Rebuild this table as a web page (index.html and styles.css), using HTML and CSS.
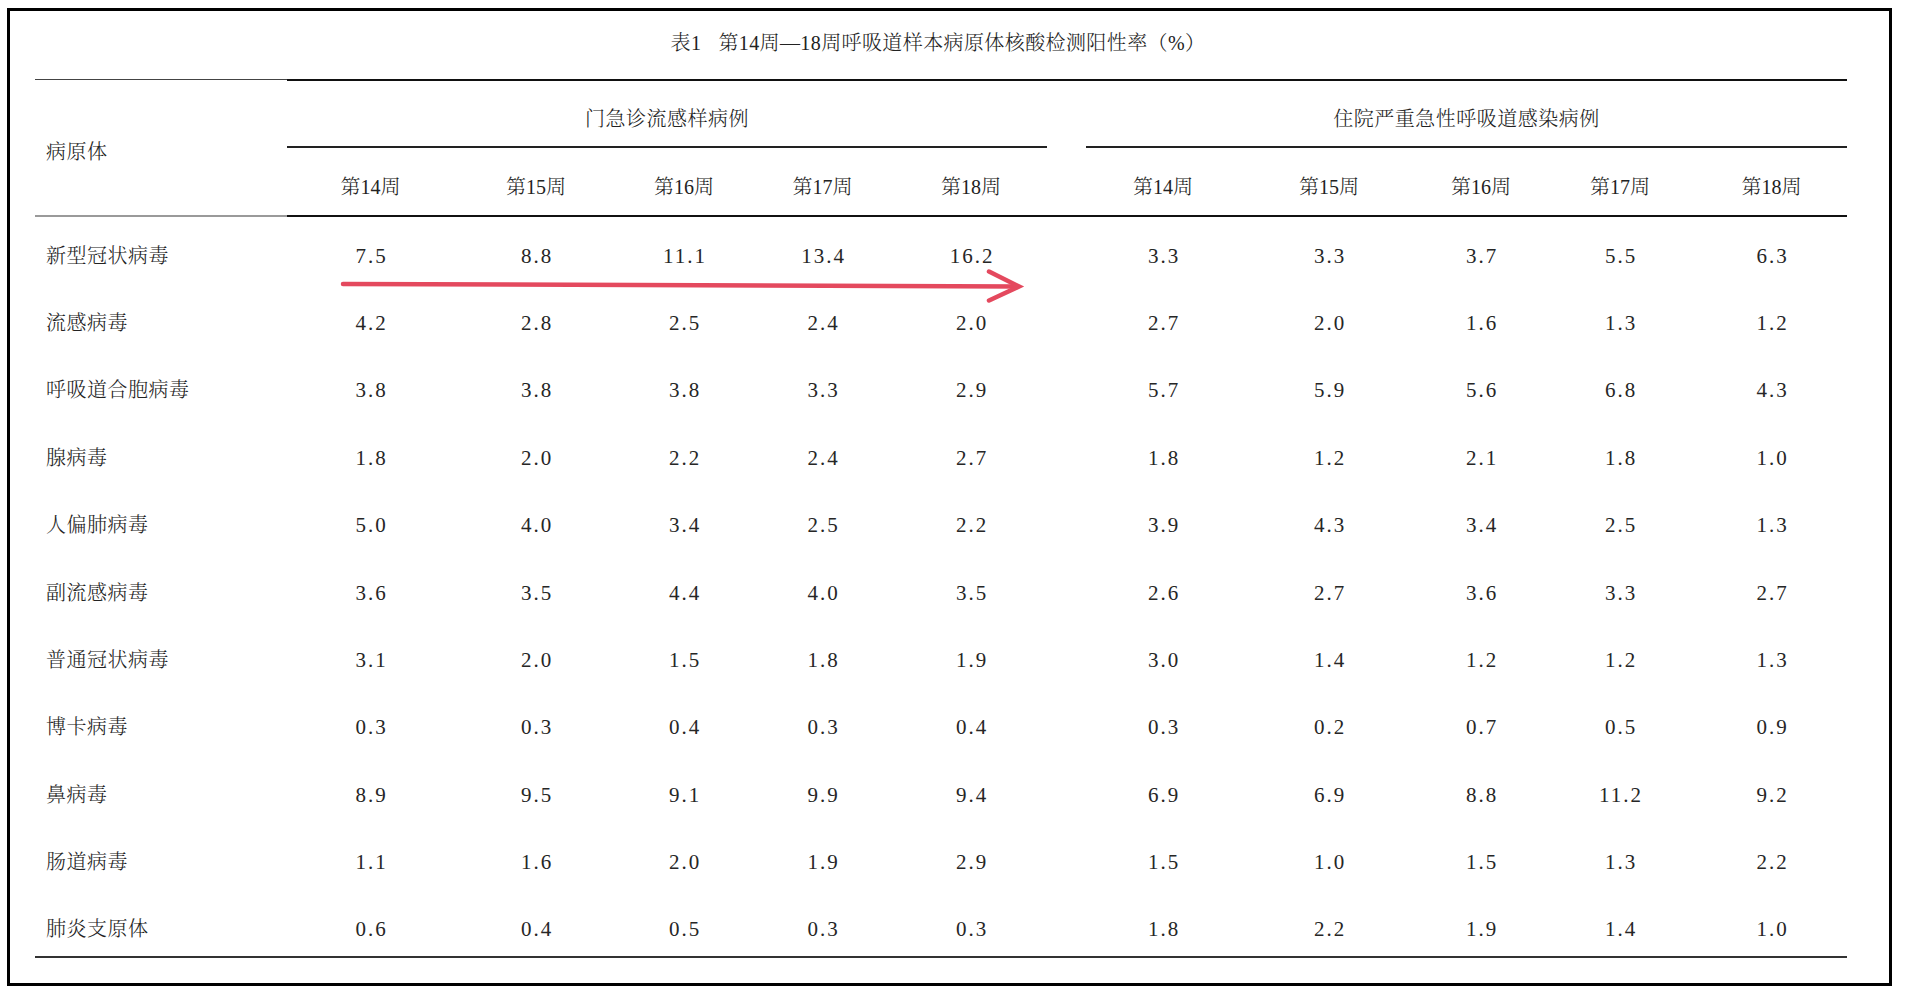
FILE: index.html
```html
<!DOCTYPE html>
<html lang="zh-CN">
<head>
<meta charset="utf-8">
<title>表1 第14周—18周呼吸道样本病原体核酸检测阳性率</title>
<link rel="stylesheet" href="styles.css">
</head>
<body>
<div class="frame">
  <div class="title">表1<span class="gap"></span>第14周—18周呼吸道样本病原体核酸检测阳性率（%）</div>
  <table class="tbl">
    <colgroup>
      <col class="w-name">
      <col class="w-a1"><col class="w-a2"><col class="w-a3"><col class="w-a4"><col class="w-a5">
      <col class="w-sp">
      <col class="w-b1"><col class="w-b2"><col class="w-b3"><col class="w-b4"><col class="w-b5">
    </colgroup>
    <thead>
      <tr class="hr1">
        <th class="name-h" rowspan="2">病原体</th>
        <th class="grp" colspan="5">门急诊流感样病例</th>
        <th class="sp-top"></th>
        <th class="grp" colspan="5">住院严重急性呼吸道感染病例</th>
      </tr>
      <tr class="hr2">
        <th>第14周</th><th>第15周</th><th>第16周</th><th>第17周</th><th>第18周</th>
        <th></th>
        <th>第14周</th><th>第15周</th><th>第16周</th><th>第17周</th><th>第18周</th>
      </tr>
    </thead>
    <tbody>
      <tr><td class="nm">新型冠状病毒</td><td>7.5</td><td>8.8</td><td>11.1</td><td>13.4</td><td>16.2</td><td></td><td>3.3</td><td>3.3</td><td>3.7</td><td>5.5</td><td>6.3</td></tr>
      <tr><td class="nm">流感病毒</td><td>4.2</td><td>2.8</td><td>2.5</td><td>2.4</td><td>2.0</td><td></td><td>2.7</td><td>2.0</td><td>1.6</td><td>1.3</td><td>1.2</td></tr>
      <tr><td class="nm">呼吸道合胞病毒</td><td>3.8</td><td>3.8</td><td>3.8</td><td>3.3</td><td>2.9</td><td></td><td>5.7</td><td>5.9</td><td>5.6</td><td>6.8</td><td>4.3</td></tr>
      <tr><td class="nm">腺病毒</td><td>1.8</td><td>2.0</td><td>2.2</td><td>2.4</td><td>2.7</td><td></td><td>1.8</td><td>1.2</td><td>2.1</td><td>1.8</td><td>1.0</td></tr>
      <tr><td class="nm">人偏肺病毒</td><td>5.0</td><td>4.0</td><td>3.4</td><td>2.5</td><td>2.2</td><td></td><td>3.9</td><td>4.3</td><td>3.4</td><td>2.5</td><td>1.3</td></tr>
      <tr><td class="nm">副流感病毒</td><td>3.6</td><td>3.5</td><td>4.4</td><td>4.0</td><td>3.5</td><td></td><td>2.6</td><td>2.7</td><td>3.6</td><td>3.3</td><td>2.7</td></tr>
      <tr><td class="nm">普通冠状病毒</td><td>3.1</td><td>2.0</td><td>1.5</td><td>1.8</td><td>1.9</td><td></td><td>3.0</td><td>1.4</td><td>1.2</td><td>1.2</td><td>1.3</td></tr>
      <tr><td class="nm">博卡病毒</td><td>0.3</td><td>0.3</td><td>0.4</td><td>0.3</td><td>0.4</td><td></td><td>0.3</td><td>0.2</td><td>0.7</td><td>0.5</td><td>0.9</td></tr>
      <tr><td class="nm">鼻病毒</td><td>8.9</td><td>9.5</td><td>9.1</td><td>9.9</td><td>9.4</td><td></td><td>6.9</td><td>6.9</td><td>8.8</td><td>11.2</td><td>9.2</td></tr>
      <tr><td class="nm">肠道病毒</td><td>1.1</td><td>1.6</td><td>2.0</td><td>1.9</td><td>2.9</td><td></td><td>1.5</td><td>1.0</td><td>1.5</td><td>1.3</td><td>2.2</td></tr>
      <tr class="last"><td class="nm">肺炎支原体</td><td>0.6</td><td>0.4</td><td>0.5</td><td>0.3</td><td>0.3</td><td></td><td>1.8</td><td>2.2</td><td>1.9</td><td>1.4</td><td>1.0</td></tr>
    </tbody>
  </table>
  <svg class="arrow" width="720" height="60" viewBox="0 0 720 60" aria-hidden="true">
    <path d="M13 22 L687 24.5" fill="none" stroke="#e4495e" stroke-width="4.5" stroke-linecap="round"/>
    <path d="M659 9.5 L689 24.5 L659 38.5" fill="none" stroke="#e4495e" stroke-width="4.5" stroke-linecap="round" stroke-linejoin="miter"/>
  </svg>
</div>
</body>
</html>
```
FILE: styles.css
```css
html, body {
  margin: 0;
  padding: 0;
  background: #fff;
}

body {
  font-family: "Liberation Serif", "Noto Serif CJK SC", "Noto Sans CJK SC", serif;
  color: #222;
}

.frame {
  position: relative;
  box-sizing: border-box;
  width: 1885px;
  height: 978px;
  margin: 8px 0 0 7px;
  border: 3px solid #000;
  padding: 0 25px;
}

.title {
  padding: 18px 23px 0 0;
  height: 28px;
  line-height: 28px;
  margin-bottom: 22px;
  text-align: center;
  font-size: 20px;
  font-weight: 300;
  letter-spacing: 0.4px;
}

.title .gap {
  display: inline-block;
  width: 17px;
}

.tbl {
  width: 1812px;
  table-layout: fixed;
  border-collapse: separate;
  border-spacing: 0;
  font-size: 20px;
  font-weight: 300;
}

.w-name { width: 252px; }
.w-a1 { width: 167px; }
.w-a2 { width: 164px; }
.w-a3 { width: 132px; }
.w-a4 { width: 145px; }
.w-a5 { width: 152px; }
.w-sp { width: 39px; }
.w-b1 { width: 154px; }
.w-b2 { width: 178px; }
.w-b3 { width: 126px; }
.w-b4 { width: 152px; }
.w-b5 { width: 151px; }

.tbl th,
.tbl td {
  padding: 0;
  font-weight: 300;
  text-align: center;
  vertical-align: middle;
  line-height: 24px;
  white-space: nowrap;
}

.hr1 { height: 69px; }
.hr1 th {
  border-top: 2px solid #111;
  border-bottom: 2px solid #222;
  padding-top: 11px;
}
.hr1 th.sp-top {
  border-bottom: 0;
}
.hr1 th.grp {
  letter-spacing: 0.5px;
}
.hr1 th.name-h {
  border-top: 1px solid #444;
  border-bottom: 2px solid #9a9a9a;
  padding: 9px 0 0 11px;
  text-align: left;
  letter-spacing: 0.5px;
}

.hr2 { height: 69px; }
.hr2 th {
  border-bottom: 2px solid #111;
  padding-top: 11px;
}

.tbl tbody tr { height: 67.4px; }
.tbl tbody td {
  padding: 10px 0 0 2px;
  font-size: 21px;
  letter-spacing: 2px;
  color: #262626;
}
.tbl tbody td.nm {
  padding-left: 11px;
  text-align: left;
  font-size: 20px;
  letter-spacing: 0.5px;
  color: #222;
}
.tbl tbody tr.last td {
  border-bottom: 2px solid #333;
}

.arrow {
  position: absolute;
  left: 320px;
  top: 251px;
}
```
